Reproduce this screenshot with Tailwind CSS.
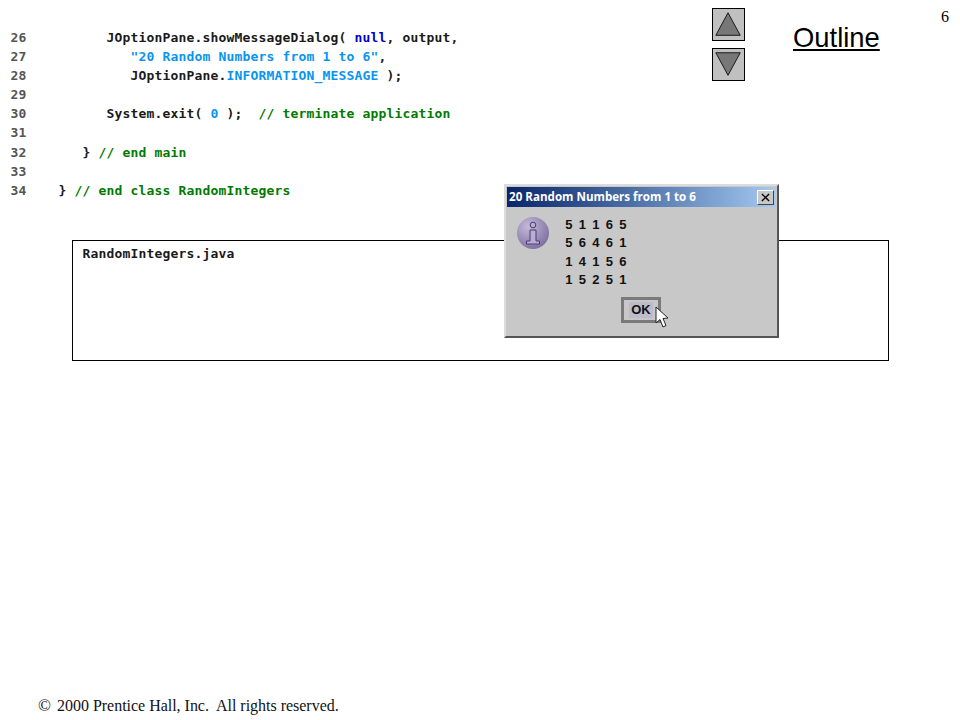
<!DOCTYPE html>
<html lang="en">
    <head>
        <meta charset="UTF-8">
        <title>RandomIntegers.java</title>
        <script src="https://cdn.jsdelivr.net/npm/@tailwindcss/browser@4"></script>
    </head>
    <body class="bg-white text-black">
        <main class="relative flex h-[720px] w-[960px] flex-col overflow-hidden">
            <div class="flex h-[240px] shrink-0 items-start">
                <pre class="ml-[10.6px] mt-[27.85px] w-[701.4px] shrink-0 font-['DejaVu_Sans_Mono',monospace] text-[13px] font-bold leading-[19.13px] tracking-[0.17px] text-[#1a1a1a]"><span class="text-[#555]">26</span>          JOptionPane.showMessageDialog( <span class="text-[#0000c8]">null</span>, output,
<span class="text-[#555]">27</span>             <span class="text-[#0a94ee]">"20 Random Numbers from 1 to 6"</span>,
<span class="text-[#555]">28</span>             JOptionPane.<span class="text-[#0a94ee]">INFORMATION_MESSAGE</span> );
<span class="text-[#555]">29</span>
<span class="text-[#555]">30</span>          System.exit( <span class="text-[#0a94ee]">0</span> );  <span class="text-[#007a00]">// terminate application</span>
<span class="text-[#555]">31</span>
<span class="text-[#555]">32</span>       } <span class="text-[#007a00]">// end main</span>
<span class="text-[#555]">33</span>
<span class="text-[#555]">34</span>    } <span class="text-[#007a00]">// end class RandomIntegers</span></pre>
                <div class="mt-[8px] flex shrink-0 flex-col gap-[7px]">
                    <button class="h-[33px] w-[33px] border border-black bg-[#c0c0c0]">
                        <svg viewBox="0 0 33 33" class="h-full w-full"><path d="M16 4 L29 28 L3 28 Z" fill="#777" stroke="#111" stroke-width="1"/></svg>
                    </button>
                    <button class="h-[33px] w-[33px] border border-black bg-[#c0c0c0]">
                        <svg viewBox="0 0 33 33" class="h-full w-full"><path d="M3 4 L29 4 L16 28 Z" fill="#777" stroke="#111" stroke-width="1"/></svg>
                    </button>
                </div>
                <div class="ml-[48px] mt-[21px] w-[86px] font-['Liberation_Sans',sans-serif] text-[27.4px] leading-[34px] underline decoration-2 underline-offset-[2px]">Outline</div>
                <div class="ml-[62px] mt-[8px] font-['Liberation_Serif',serif] text-[16px] leading-[18px]">6</div>
            </div>

            <div class="ml-[72px] h-[121px] w-[817px] shrink-0 border border-black pl-[9.6px] pt-[3px] font-['DejaVu_Sans_Mono',monospace] text-[13px] font-bold leading-[19px] tracking-[0.17px] text-[#1a1a1a]">RandomIntegers.java</div>

            <footer class="mb-[5px] mt-auto flex items-center pl-[38px] font-['Liberation_Serif',serif] text-[16px] leading-[18px] text-[#111]">
                <span class="w-[19px] text-[17px]">©</span>
                <span class="whitespace-pre tracking-[-0.02px]">2000 Prentice Hall, Inc.  All rights reserved.</span>
            </footer>

            <!-- dialog sits over the box -->
            <div class="absolute left-[504px] top-[184px] flex h-[154px] w-[275px] flex-col border-2 border-[#dcdcdc] border-b-[#555] border-r-[#555] bg-[#c8c8c8] p-px">
                <div class="flex h-[20px] shrink-0 items-center justify-between bg-linear-to-r from-[#0a246a] to-[#a6caf0] pl-[2px] pr-[2px] font-['Open_Sans',sans-serif] text-[11.6px] font-bold text-white">
                    <span>20 Random Numbers from 1 to 6</span>
                    <span class="flex h-[15px] w-[17px] items-center justify-center border border-[#444] border-l-white border-t-white bg-[#c8c8c8]">
                        <svg viewBox="0 0 10 10" class="h-[9px] w-[9px]"><path d="M1 1 L9 9 M9 1 L1 9" stroke="#000" stroke-width="1.6"/></svg>
                    </span>
                </div>
                <div class="relative flex flex-1 flex-col">
                    <div class="flex pl-[10px] pt-[10px]">
                        <svg viewBox="0 0 32 32" class="h-[32px] w-[32px] shrink-0">
                            <defs>
                                <radialGradient id="infoBg" cx="0.35" cy="0.3" r="0.8">
                                    <stop offset="0" stop-color="#c4bad8"/>
                                    <stop offset="1" stop-color="#7a6a9e"/>
                                </radialGradient>
                            </defs>
                            <circle cx="16" cy="16" r="16" fill="url(#infoBg)"/>
                            <circle cx="16" cy="8" r="2.8" fill="#b8aed0" stroke="#4a3a78" stroke-width="1"/>
                            <path d="M13 13 H19 V24 H22.5 V27 H9.5 V24 H13 Z" fill="#b8aed0" stroke="#4a3a78" stroke-width="1"/>
                        </svg>
                        <div class="ml-[13px] mt-[-1px] font-['Liberation_Sans',sans-serif] text-[13px] font-bold leading-[18.4px] text-[#111]">
                            <div class="grid w-[67.5px] grid-cols-5 text-center"><span>5</span><span>1</span><span>1</span><span>6</span><span>5</span></div>
                            <div class="grid w-[67.5px] grid-cols-5 text-center"><span>5</span><span>6</span><span>4</span><span>6</span><span>1</span></div>
                            <div class="grid w-[67.5px] grid-cols-5 text-center"><span>1</span><span>4</span><span>1</span><span>5</span><span>6</span></div>
                            <div class="grid w-[67.5px] grid-cols-5 text-center"><span>1</span><span>5</span><span>2</span><span>5</span><span>1</span></div>
                        </div>
                    </div>
                    <div class="ml-[114px] mt-[7px] flex h-[26px] w-[40px] items-center justify-center border-[3px] border-[#7a7a7a] bg-[#c8c8c8]">
                        <span class="bg-[#bcbccc] px-[2px] font-['Liberation_Sans',sans-serif] text-[13px] font-bold leading-[16px] text-[#111]">OK</span>
                    </div>
                    <svg viewBox="0 0 14 24" class="absolute left-[148px] top-[99px] h-[24px] w-[14px]"><path d="M1 1 L1 17 L5 13.5 L8 21 L11 19.5 L8 12.5 L13 12 Z" fill="#fff" stroke="#222" stroke-width="1"/></svg>
                </div>
            </div>
        </main>
    </body>
</html>
